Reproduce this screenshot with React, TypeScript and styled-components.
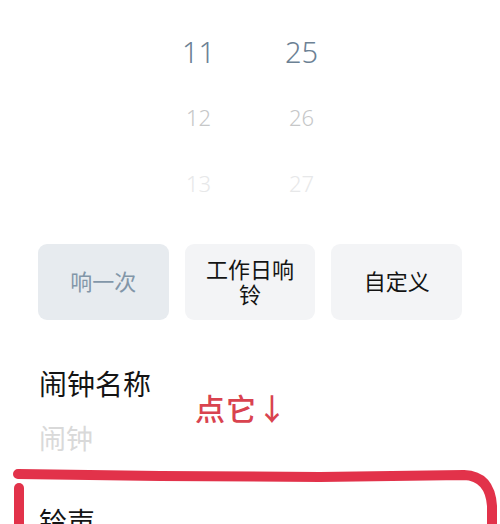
import React from 'react';
import styled, { createGlobalStyle } from 'styled-components';

const GlobalStyle = createGlobalStyle`
  *, *::before, *::after {
    box-sizing: border-box;
  }
  html, body {
    margin: 0;
    padding: 0;
    background: #ffffff;
  }
  body {
    font-family: "Noto Sans CJK SC", "Noto Sans", sans-serif;
    overflow: hidden;
  }
`;

const Page = styled.div`
  position: relative;
  width: 500px;
  height: 524px;
  overflow: hidden;
  background: #fff;
`;

const Picker = styled.div`
  display: flex;
  justify-content: center;
  padding-top: 18px;
`;

const Column = styled.div`
  width: 103px;
  display: flex;
  flex-direction: column;
  align-items: center;
`;

const Num = styled.div<{ $level: number }>`
  height: 66px;
  display: flex;
  align-items: center;
  justify-content: center;
  font-family: "Noto Sans", "Open Sans", sans-serif;
  font-weight: 300;
  font-size: ${(p) => (p.$level === 0 ? '29px' : '22px')};
  color: ${(p) => (p.$level === 0 ? '#6c8194' : p.$level === 1 ? '#c6c7c8' : '#e7e8e9')};
`;

const Repeats = styled.div`
  display: grid;
  grid-template-columns: repeat(3, 1fr);
  gap: 16px;
  padding: 0 38px;
  margin-top: 28px;
`;

const RepeatButton = styled.div<{ $active?: boolean }>`
  height: 76px;
  border-radius: 9px;
  display: flex;
  align-items: center;
  justify-content: center;
  text-align: center;
  padding: 0 16px 3px;
  font-size: 22px;
  line-height: 25px;
  background: ${(p) => (p.$active ? '#e7ebef' : '#f3f4f6')};
  color: ${(p) => (p.$active ? '#8296a8' : '#141414')};
`;

const Section = styled.div<{ $gap: number }>`
  padding: 0 39px;
  margin-top: ${(p) => p.$gap}px;
`;

const Label = styled.div`
  font-size: 28px;
  line-height: 36px;
  color: #141414;
`;

const Placeholder = styled.div`
  margin-top: 19px;
  font-size: 27px;
  line-height: 36px;
  color: #d9d9d9;
`;

const Note = styled.div`
  position: absolute;
  left: 195px;
  top: 387px;
  font-size: 30px;
  line-height: 40px;
  font-weight: 500;
  color: #d9434f;
  letter-spacing: 1px;
`;

const Ring = styled.svg`
  position: absolute;
  left: 0;
  top: 0;
  pointer-events: none;
`;

const hours = ['11', '12', '13'];
const minutes = ['25', '26', '27'];

export default function App() {
  return (
    <Page>
      <GlobalStyle />
      <Picker>
        <Column>
          {hours.map((h, i) => (
            <Num key={h} $level={i}>{h}</Num>
          ))}
        </Column>
        <Column>
          {minutes.map((m, i) => (
            <Num key={m} $level={i}>{m}</Num>
          ))}
        </Column>
      </Picker>

      <Repeats>
        <RepeatButton $active>响一次</RepeatButton>
        <RepeatButton>工作日响铃</RepeatButton>
        <RepeatButton>自定义</RepeatButton>
      </Repeats>

      <Section $gap={45}>
        <Label>闹钟名称</Label>
        <Placeholder>闹钟</Placeholder>
      </Section>

      <Section $gap={47}>
        <Label>铃声</Label>
      </Section>

      <Note>点它↓</Note>

      <Ring width="500" height="524" viewBox="0 0 500 524">
        <path
          d="M18 474 L 160 476 L 320 477 L 464 475 Q 490 476 492 506 L 492 530"
          fill="none"
          stroke="#e2324a"
          strokeWidth="10"
          strokeLinecap="round"
          strokeLinejoin="round"
        />
        <path d="M19 488 L 19 530" fill="none" stroke="#e2324a" strokeWidth="10" strokeLinecap="round" />
      </Ring>
    </Page>
  );
}
